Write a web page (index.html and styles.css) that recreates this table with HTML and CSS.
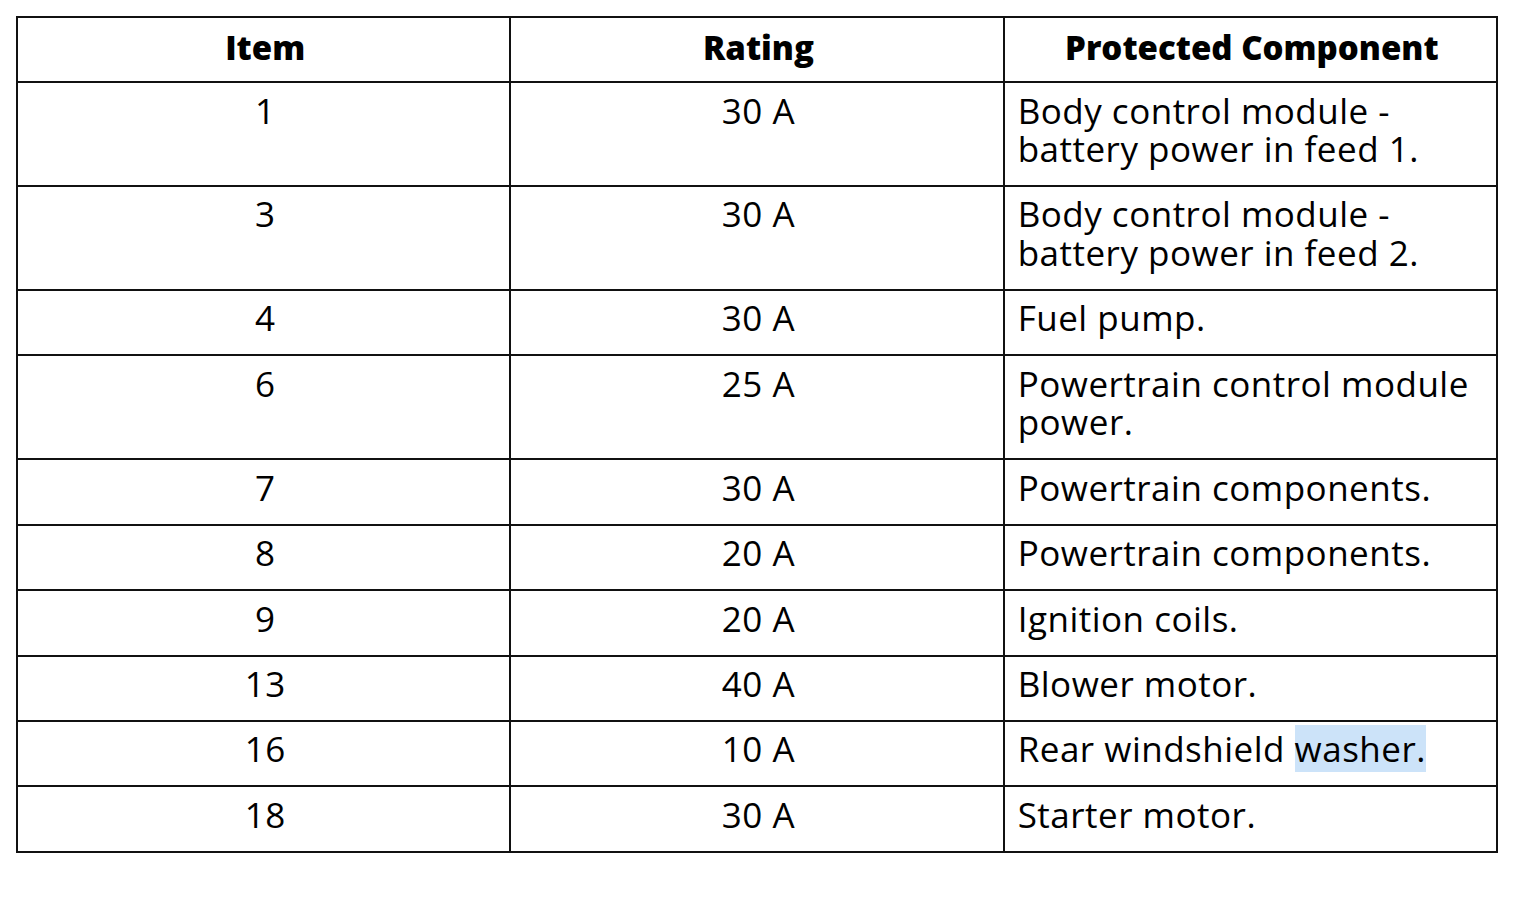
FILE: index.html
```html
<!DOCTYPE html>
<html>
<head>
<meta charset="utf-8">
<link rel="stylesheet" href="styles.css">
</head>
<body>
<div class="page">
<table class="fuses">
  <thead>
    <tr><th>Item</th><th>Rating</th><th>Protected Component</th></tr>
  </thead>
  <tbody>
    <tr><td class="c">1</td><td class="c">30 A</td><td>Body control module - battery power in feed 1.</td></tr>
    <tr><td class="c">3</td><td class="c">30 A</td><td>Body control module - battery power in feed 2.</td></tr>
    <tr><td class="c">4</td><td class="c">30 A</td><td>Fuel pump.</td></tr>
    <tr><td class="c">6</td><td class="c">25 A</td><td>Powertrain control module power.</td></tr>
    <tr><td class="c">7</td><td class="c">30 A</td><td>Powertrain components.</td></tr>
    <tr><td class="c">8</td><td class="c">20 A</td><td>Powertrain components.</td></tr>
    <tr><td class="c">9</td><td class="c">20 A</td><td>Ignition coils.</td></tr>
    <tr><td class="c">13</td><td class="c">40 A</td><td>Blower motor.</td></tr>
    <tr><td class="c">16</td><td class="c">10 A</td><td>Rear windshield <span class="sel">washer.</span></td></tr>
    <tr><td class="c">18</td><td class="c">30 A</td><td>Starter motor.</td></tr>
  </tbody>
</table>
</div>
</body>
</html>
```
FILE: styles.css
```css
html, body {
  margin: 0;
  padding: 0;
  background: #fff;
}
.page {
  padding: 16px 0 0 16px;
}
.fuses {
  width: 1482px;
  border-collapse: collapse;
  table-layout: fixed;
  font-family: "Open Sans", Lato, sans-serif;
  color: #000;
}
.fuses th,
.fuses td {
  border: 2px solid #111;
  vertical-align: top;
  padding: 8.5px 10px 16.3px 13px;
  line-height: 38.6px;
  font-size: 35px;
  letter-spacing: 0.5px;
}
.fuses th {
  font-weight: 800;
  font-size: 33px;
  letter-spacing: 0;
  text-align: center;
  padding-top: 10px;
  padding-bottom: 13px;
  line-height: 40px;
}
.fuses td {
  font-weight: 400;
  text-align: left;
}
.fuses td.c {
  text-align: center;
}
.sel {
  background: #cce3f9;
}
```
